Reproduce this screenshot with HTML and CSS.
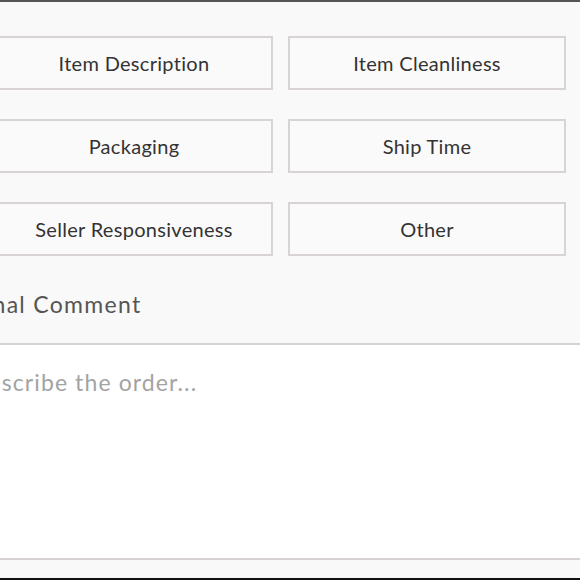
FILE: index.html
```html
<!DOCTYPE html>
<html lang="en">
<head>
    <meta charset="UTF-8">
    <meta name="viewport" content="width=device-width, initial-scale=1.0">
    <title>Order Feedback</title>
    <link rel="stylesheet" href="styles.css">
</head>
<body>
    <div class="sheet">
        <div class="reasons">
            <button class="reason">Item Description</button>
            <button class="reason">Item Cleanliness</button>
            <button class="reason">Packaging</button>
            <button class="reason">Ship Time</button>
            <button class="reason">Seller Responsiveness</button>
            <button class="reason">Other</button>
        </div>

        <h2 class="comment-title">Additional Comment</h2>
        <textarea class="comment" placeholder="Describe the order..."></textarea>
    </div>
    <div class="home-bar"></div>
</body>
</html>
```

FILE: styles.css
```css
html,
body {
    margin: 0;
    height: 100%;
    overflow: hidden;
}

body {
    background-color: #f9f9f9;
    border-top: 2px solid #555;
    box-sizing: border-box;
    font-family: "Lato", "Noto Sans", sans-serif;
    position: relative;
}

.sheet {
    padding-top: 34px;
}

.reasons {
    display: grid;
    grid-template-columns: 278px 278px;
    column-gap: 15px;
    row-gap: 29px;
    margin-left: -5px;
}

.reason {
    height: 54px;
    padding: 0;
    background-color: #fbfafa;
    border: 2px solid #d8d4d4;
    border-radius: 0;
    font-family: inherit;
    font-size: 20px;
    color: #333;
    letter-spacing: 0.3px;
}

.comment-title {
    margin: 34px 0 0 -90px;
    font-size: 23px;
    font-weight: normal;
    color: #555;
    letter-spacing: 1.3px;
    white-space: nowrap;
}

.comment {
    display: block;
    box-sizing: border-box;
    width: 620px;
    height: 217px;
    margin: 25px 0 0 -20px;
    padding: 23px 0 0 0;
    text-indent: -10px;
    background-color: #fff;
    border: none;
    border-top: 2px solid #d6d2d2;
    border-bottom: 2px solid #d6d2d2;
    font-family: inherit;
    font-size: 23px;
    letter-spacing: 1.1px;
    resize: none;
    outline: none;
}

.comment::placeholder {
    color: #a3a3a3;
}

.home-bar {
    position: absolute;
    left: 0;
    right: 0;
    bottom: 0;
    height: 2px;
    background-color: #111;
}
```
